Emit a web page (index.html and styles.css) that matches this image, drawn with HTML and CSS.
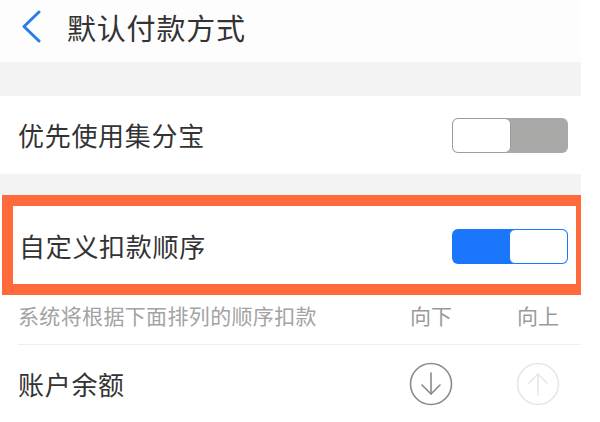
FILE: index.html
```html
<!DOCTYPE html>
<html lang="zh-CN">
<head>
<meta charset="utf-8">
<title>默认付款方式</title>
<link rel="stylesheet" href="styles.css">
</head>
<body>
<div class="page">
  <header class="header">
    <svg class="back" width="20" height="34" viewBox="0 0 20 34">
      <polyline points="17,2 2,16.5 17,31" fill="none" stroke="#2a7de8" stroke-width="3" stroke-linecap="round" stroke-linejoin="round"/>
    </svg>
    <h1 class="title">默认付款方式</h1>
  </header>
  <div class="gap gap-top"></div>
  <div class="row">
    <span class="label">优先使用集分宝</span>
    <div class="switch off"><div class="knob"></div></div>
  </div>
  <div class="gap gap-mid"></div>
  <div class="hl-wrap">
    <div class="highlight">
      <span class="label">自定义扣款顺序</span>
      <div class="switch on"><div class="knob"></div></div>
    </div>
  </div>
  <div class="list">
    <div class="sub">
      <span class="sub-text">系统将根据下面排列的顺序扣款</span>
      <span class="col">向下</span>
      <span class="col">向上</span>
    </div>
    <div class="item">
      <span class="label item-label">账户余额</span>
      <span class="col">
        <svg width="44" height="44" viewBox="0 0 44 44">
          <circle cx="22" cy="22" r="20.5" fill="none" stroke="#8a8a8a" stroke-width="1.6"/>
          <line x1="22" y1="11" x2="22" y2="32" stroke="#8a8a8a" stroke-width="1.6" stroke-linecap="round"/>
          <polyline points="13,23 22,32 31,23" fill="none" stroke="#8a8a8a" stroke-width="1.6" stroke-linecap="round" stroke-linejoin="round"/>
        </svg>
      </span>
      <span class="col">
        <svg width="44" height="44" viewBox="0 0 44 44">
          <circle cx="22" cy="22" r="20.5" fill="none" stroke="#e6e6e6" stroke-width="1.6"/>
          <line x1="22" y1="12" x2="22" y2="33" stroke="#e6e6e6" stroke-width="1.6" stroke-linecap="round"/>
          <polyline points="13,21 22,12 31,21" fill="none" stroke="#e6e6e6" stroke-width="1.6" stroke-linecap="round" stroke-linejoin="round"/>
        </svg>
      </span>
    </div>
  </div>
</div>
</body>
</html>
```

FILE: styles.css
```css
html, body {
  margin: 0;
  padding: 0;
  background: #ffffff;
}
body {
  width: 600px;
  height: 422px;
  overflow: hidden;
  font-family: "Noto Sans CJK SC", "Noto Sans", sans-serif;
  color: #333333;
}
.page {
  width: 581px;
  background: #f3f3f3;
}
.header {
  height: 62px;
  background: #fdfdfd;
  display: flex;
  align-items: center;
  padding-left: 22px;
  padding-bottom: 8px;
  box-sizing: border-box;
}
.back {
  display: block;
}
.title {
  margin: 0 0 0 25px;
  font-size: 29px;
  font-weight: 400;
  line-height: 1;
  letter-spacing: 0.8px;
  color: #333;
}
.gap-top { height: 34px; }
.gap-mid { height: 21px; }
.row {
  height: 78px;
  background: #ffffff;
  display: flex;
  align-items: center;
  justify-content: space-between;
  padding: 0 13px 0 18px;
  box-sizing: border-box;
}
.label {
  font-size: 26px;
  line-height: 1;
  letter-spacing: 0.7px;
  color: #333;
}
.switch {
  width: 116px;
  height: 35px;
  border-radius: 6px;
  overflow: hidden;
  display: flex;
  box-sizing: border-box;
}
.switch .knob {
  width: 59px;
  height: 100%;
  background: #fff;
  border-radius: 6px;
  box-sizing: border-box;
}
.switch.off {
  background: #a9aaa8;
}
.switch.off .knob {
  border: 1.5px solid #9c9c9c;
}
.switch.on {
  background: #1a76fb;
  justify-content: flex-end;
}
.switch.on .knob {
  border: 1.5px solid #1a76fb;
}
.hl-wrap {
  background: #ffffff;
  padding-left: 2px;
}
.highlight {
  height: 100px;
  border: 11px solid #ff6a3b;
  border-right-width: 5px;
  background: #ffffff;
  display: flex;
  align-items: center;
  justify-content: space-between;
  padding: 2px 8px 0 6px;
  box-sizing: border-box;
}
.list {
  background: #ffffff;
  height: 127px;
}
.sub {
  margin-left: 18px;
  height: 50px;
  border-bottom: 1px solid #efefef;
  display: flex;
  align-items: center;
  box-sizing: border-box;
  padding-bottom: 8px;
}
.sub-text {
  flex: 1;
  font-size: 21px;
  letter-spacing: 0.35px;
  color: #a3a3a3;
  line-height: 1;
}
.col {
  width: 70px;
  display: flex;
  justify-content: center;
  align-items: center;
  font-size: 21px;
  color: #9a9a9a;
  line-height: 1;
}
.col + .col {
  margin-left: 37px;
  margin-right: 8px;
}
.item {
  margin-left: 18px;
  height: 78px;
  display: flex;
  align-items: center;
}
.item-label {
  flex: 1;
}
.col svg {
  display: block;
}
```
